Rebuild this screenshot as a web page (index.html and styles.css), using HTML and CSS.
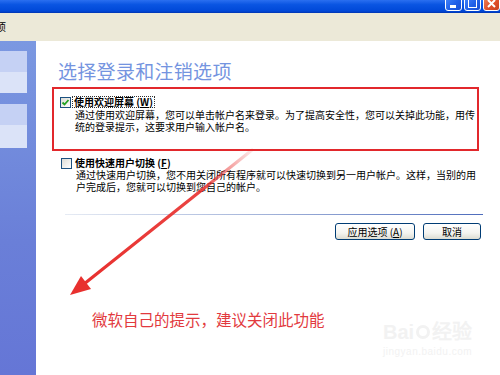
FILE: index.html
```html
<!DOCTYPE html>
<html lang="zh-CN">
<head>
<meta charset="utf-8">
<title>选择登录和注销选项</title>
<link rel="stylesheet" href="styles.css">
</head>
<body>
<div class="titlebar">
  <div class="tb-btn">
    <svg width="15" height="15" viewBox="0 0 15 15"><rect x="4" y="10" width="6" height="3" fill="#fff"/></svg>
  </div>
  <div class="tb-btn">
    <svg width="15" height="15" viewBox="0 0 15 15"><rect x="3.5" y="3.5" width="8" height="9" fill="none" stroke="#fff" stroke-width="1"/><rect x="3" y="3" width="9" height="2" fill="#fff"/></svg>
  </div>
  <div class="tb-btn close">
    <svg width="15" height="15" viewBox="0 0 15 15"><path d="M4 5 L11 12 M11 5 L4 12" stroke="#fff" stroke-width="2"/></svg>
  </div>
</div>
<div class="menubar"><span class="menu-item">项</span></div>
<div class="main">
  <div class="sidebar">
    <div class="panel"><div class="panel-head"></div><div class="panel-body"></div></div>
    <div class="panel"><div class="panel-head"></div><div class="panel-body tall"></div></div>
  </div>
  <div class="content">
    <h1 class="title">选择登录和注销选项</h1>
    <div class="highlight">
      <div class="option">
        <div class="opt-head">
          <span class="checkbox checked">
            <svg width="9" height="9" viewBox="0 0 9 9"><path d="M1.5 4.5 L3.5 6.5 L7.5 2" fill="none" stroke="#21a121" stroke-width="1.8"/></svg>
          </span>
          <span class="opt-label focus">使用欢迎屏幕 (<u>W</u>)</span>
        </div>
        <div class="opt-desc first">通过使用欢迎屏幕，您可以单击帐户名来登录。为了提高安全性，您可以关掉此功能，用传<br>统的登录提示，这要求用户输入帐户名。</div>
      </div>
    </div>
    <div class="option second">
      <div class="opt-head">
        <span class="checkbox"></span>
        <span class="opt-label">使用快速用户切换 (<u>F</u>)</span>
      </div>
      <div class="opt-desc">通过快速用户切换，您不用关闭所有程序就可以快速切换到另一用户帐户。这样，当别的用<br>户完成后，您就可以切换到您自己的帐户。</div>
    </div>
    <div class="separator"></div>
    <div class="buttons">
      <button class="xp-btn apply">应用选项 (<u>A</u>)</button>
      <button class="xp-btn cancel">取消</button>
    </div>
    <p class="caption">微软自己的提示，建议关闭此功能</p>
  </div>
</div>

<svg class="arrow" width="500" height="375" viewBox="0 0 500 375">
  <defs>
    <linearGradient id="fade" gradientUnits="userSpaceOnUse" x1="252" y1="150" x2="86" y2="283">
      <stop offset="0" stop-color="#e8302e" stop-opacity="0.1"/>
      <stop offset="0.3" stop-color="#e8302e" stop-opacity="0.9"/>
      <stop offset="1" stop-color="#e8302e" stop-opacity="1"/>
    </linearGradient>
  </defs>
  <line x1="252" y1="150" x2="84" y2="284" stroke="url(#fade)" stroke-width="3.2" stroke-linecap="round"/>
  <polygon points="70,295 81,276 91,289" fill="#e8302e"/>
</svg>

<div class="watermark">
  <div class="wm-top">Bai<span class="paw"></span>经验</div>
  <div class="wm-url">jingyan.baidu.com</div>
</div>
</body>
</html>
```
FILE: styles.css
```css
* { box-sizing: border-box; }

body {
  margin: 0;
  width: 500px;
  height: 375px;
  overflow: hidden;
  position: relative;
  background: #fff;
  font-family: "Noto Sans CJK SC", "Noto Sans", sans-serif;
  color: #000;
}

.titlebar {
  height: 13px;
  background: linear-gradient(#2a6ff0, #0a55e2 35%, #0048d8 85%, #0034b0);
  display: flex;
  justify-content: flex-end;
  align-items: flex-end;
  gap: 2px;
  overflow: hidden;
}

.tb-btn {
  width: 17px;
  height: 17px;
  flex: none;
  margin-bottom: 2px;
  border: 1px solid #fff;
  border-radius: 3px;
  background: linear-gradient(135deg, #4a8cff, #1f5fe8 60%, #1a4fd0);
  display: flex;
  align-items: flex-end;
  justify-content: center;
}

.tb-btn svg { display: block; }

.tb-btn.close {
  background: linear-gradient(135deg, #f08a60, #e0502a 60%, #c8401e);
}

.menubar {
  height: 28px;
  background: #ece9d8;
  padding-top: 8px;
  font-size: 10px;
  line-height: 12px;
}

.menu-item { margin-left: -4px; }

.main {
  display: flex;
  height: 334px;
}

.sidebar {
  width: 36px;
  flex: none;
  background: linear-gradient(#7b98e1, #6a7fd8 60%, #6576d6);
  padding-top: 10px;
  display: flex;
  flex-direction: column;
  gap: 11px;
}

.panel { width: 27px; }
.panel-head { height: 21px; background: #c5d1f4; }
.panel-body { height: 21px; background: #dbe3f8; }
.panel-body.tall { height: 23px; }

.content {
  flex: 1;
  padding-top: 18px;
}

.title {
  margin: 0 0 0 22px;
  font-size: 19px;
  line-height: 23px;
  font-weight: normal;
  color: #7494e0;
  letter-spacing: 0.3px;
}

.highlight {
  margin-top: 5px;
  margin-left: 16px;
  width: 427px;
  border: 2px solid #e2282c;
  padding: 7px 0 16px 6px;
}

.opt-head {
  display: flex;
  align-items: center;
  height: 12px;
}

.checkbox {
  width: 11px;
  height: 11px;
  flex: none;
  border: 1px solid #1c5180;
  background: linear-gradient(135deg, #dcdcd6, #fff);
  display: flex;
  align-items: center;
  justify-content: center;
  margin-right: 1px;
}

.checkbox svg { display: block; }

.opt-label {
  font-size: 10px;
  line-height: 10px;
  font-weight: 700;
  padding: 0 1px;
  border: 1px solid transparent;
  white-space: nowrap;
}

.opt-label.focus { border: 1px dotted #333; }

.opt-label u, .xp-btn u { text-decoration: underline; }

.opt-desc {
  margin-left: 15px;
  font-size: 10px;
  line-height: 12px;
  white-space: nowrap;
}

.opt-desc.first { margin-top: 1px; }

.option.second {
  margin-top: 6px;
  margin-left: 25px;
}

.separator {
  margin-top: 21px;
  margin-left: 29px;
  width: 418px;
  height: 1px;
  background: linear-gradient(to right, #e6ebf4, #9fb0d8 50%, #4e6cbc);
}

.buttons {
  margin-top: 8px;
  display: flex;
  justify-content: flex-end;
  gap: 8px;
  padding-right: 19px;
}

.xp-btn {
  height: 17px;
  padding: 0;
  border: 1px solid #003c74;
  border-radius: 3px;
  background: linear-gradient(#ffffff, #f4f4f0 60%, #dcdcd2);
  font-family: "Noto Sans CJK SC", "Noto Sans", sans-serif;
  font-size: 10px;
  line-height: 14px;
  color: #000;
}

.xp-btn.apply { width: 80px; }
.xp-btn.cancel { width: 58px; }

.caption {
  margin: 70px 0 0 56px;
  font-size: 15.5px;
  line-height: 19px;
  color: #e23a3e;
  white-space: nowrap;
}

.arrow {
  position: absolute;
  left: 0;
  top: 0;
  pointer-events: none;
}

.watermark {
  position: absolute;
  left: 383px;
  top: 322px;
  color: #f2f2f2;
  font-family: "Liberation Sans", sans-serif;
  line-height: 1;
}

.wm-top {
  font-size: 20px;
  font-weight: 700;
  display: flex;
  align-items: center;
}

.wm-top .paw {
  width: 14px;
  height: 14px;
  border-radius: 50%;
  border: 3px solid #f2f2f2;
  margin: 0 2px;
}

.wm-url {
  font-size: 10px;
  margin-top: 5px;
  letter-spacing: 0.5px;
}
```
